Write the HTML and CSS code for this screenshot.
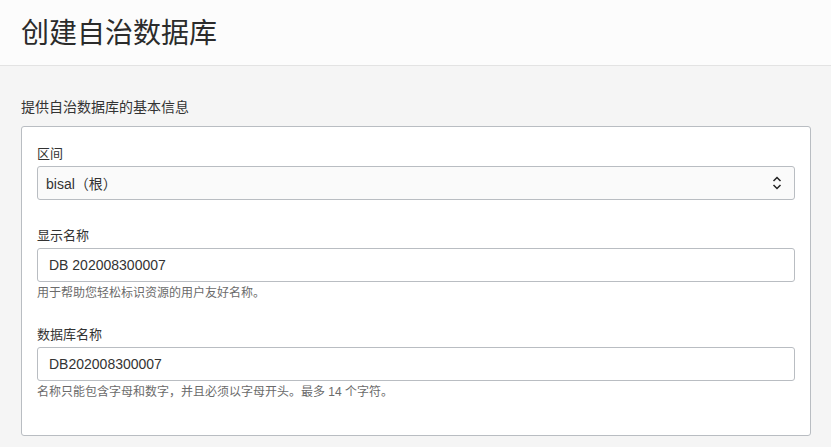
FILE: index.html
```html
<!DOCTYPE html>
<html lang="zh-CN">
<head>
<meta charset="utf-8">
<title>创建自治数据库</title>
<link rel="stylesheet" href="styles.css">
</head>
<body>
<header class="page-header">
  <h1 class="page-title">创建自治数据库</h1>
</header>
<main class="page-body">
  <div class="section-label">提供自治数据库的基本信息</div>
  <section class="card">
    <div class="field">
      <label class="field-label">区间</label>
      <div class="select">
        <span class="select-value">bisal（根）</span>
        <svg class="select-arrows" width="10" height="14" viewBox="0 0 10 14" aria-hidden="true">
          <path d="M1.5 5 L5 1.5 L8.5 5" fill="none" stroke="#222" stroke-width="1.5"/>
          <path d="M1.5 9 L5 12.5 L8.5 9" fill="none" stroke="#222" stroke-width="1.5"/>
        </svg>
      </div>
    </div>
    <div class="field">
      <label class="field-label">显示名称</label>
      <div class="input">DB 202008300007</div>
      <div class="help">用于帮助您轻松标识资源的用户友好名称。</div>
    </div>
    <div class="field field-last">
      <label class="field-label">数据库名称</label>
      <div class="input">DB202008300007</div>
      <div class="help">名称只能包含字母和数字，并且必须以字母开头。最多 14 个字符。</div>
    </div>
  </section>
</main>
</body>
</html>
```
FILE: styles.css
```css
* { box-sizing: border-box; }
html, body { margin: 0; padding: 0; }
body {
  background: #f5f5f5;
  font-family: "Liberation Sans", "Noto Sans CJK SC", sans-serif;
  color: #333;
  width: 831px;
  height: 447px;
  overflow: hidden;
}
.page-header {
  background: #fcfcfc;
  height: 66px;
  border-bottom: 1px solid #e3e3e3;
  padding: 11px 21px 0;
}
.page-title {
  margin: 0;
  font-family: "Noto Sans CJK SC", sans-serif;
  font-weight: 400;
  font-size: 28px;
  line-height: 40px;
  color: #2b2b2b;
}
.page-body {
  padding: 30px 20px 0 21px;
}
.section-label {
  font-family: "Noto Sans CJK SC", sans-serif;
  font-size: 14px;
  line-height: 20px;
  color: #333;
  margin-bottom: 10px;
}
.card {
  background: #fff;
  border: 1px solid #b9bdc2;
  border-radius: 3px;
  padding: 17px 15px 34px;
  height: 310px;
}
.field { display: flex; flex-direction: column; }
.field + .field { margin-top: 26px; }
.field.field-last { margin-top: 23px; }
.field-label {
  font-family: "Noto Sans CJK SC", sans-serif;
  font-size: 13px;
  line-height: 18px;
  color: #333;
  margin-bottom: 4px;
}
.select {
  height: 34px;
  border: 1px solid #b9bdc2;
  border-radius: 3px;
  background: #fafafa;
  display: flex;
  align-items: center;
  justify-content: space-between;
  padding: 0 12px 0 8px;
}
.select-value {
  font-size: 14px;
  color: #333;
}
.select-arrows { display: block; }
.input {
  height: 34px;
  border: 1px solid #b9bdc2;
  border-radius: 3px;
  background: #fff;
  display: flex;
  align-items: center;
  padding: 0 11px;
  font-size: 14px;
  color: #333;
}
.help {
  font-family: "Liberation Sans", "Noto Sans CJK SC", sans-serif;
  font-size: 12px;
  line-height: 18px;
  color: #6b6b6b;
  margin-top: 2px;
}
```
